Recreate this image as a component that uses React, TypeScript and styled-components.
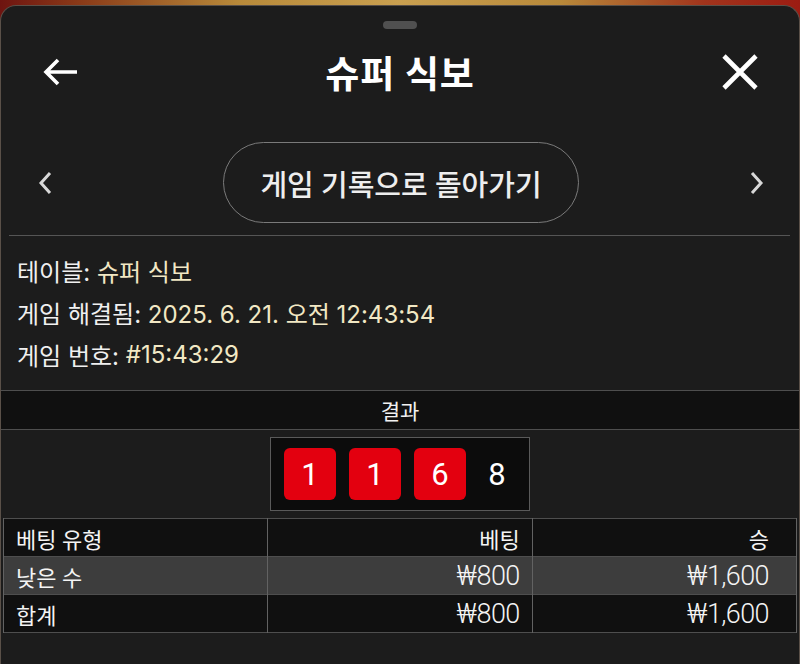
import React from "react";
import styled, { createGlobalStyle } from "styled-components";

const GlobalStyle = createGlobalStyle`
  html, body {
    margin: 0;
    padding: 0;
    height: 100%;
    overflow: hidden;
  }
  body {
    background: linear-gradient(
      90deg,
      #6e1410 0%,
      #8a3a18 10%,
      #b88a3a 30%,
      #c9a050 50%,
      #b8893a 70%,
      #a1341c 88%,
      #9c1c12 100%
    );
    font-family: Roboto, "Noto Sans CJK KR", sans-serif;
    color: #f0f0f0;
  }
`;

const colors = {
  panel: "#1c1c1c",
  dark: "#101010",
  line: "#4e4e4e",
  cellLine: "#626262",
  highlight: "#3d3d3d",
  value: "#f2e8c4",
  red: "#e3000f",
};

const Sheet = styled.div`
  margin-top: 5px;
  height: 659px;
  box-sizing: border-box;
  background: ${colors.panel};
  border: 1px solid #5a5048;
  border-bottom: none;
  border-radius: 16px 16px 0 0;
  display: flex;
  flex-direction: column;
`;

const Handle = styled.div`
  align-self: center;
  width: 34px;
  height: 8px;
  border-radius: 4px;
  background: #505050;
  margin-top: 15px;
`;

const Header = styled.div`
  display: grid;
  grid-template-columns: 120px 1fr 120px;
  align-items: center;
  height: 86px;
`;

const IconButton = styled.button<{ $side: "left" | "right" }>`
  background: none;
  border: none;
  padding: 0;
  display: flex;
  justify-content: center;
  align-items: center;
  color: #ffffff;
  width: 50px;
  height: 50px;
  justify-self: ${(p) => (p.$side === "left" ? "start" : "end")};
  margin: ${(p) => (p.$side === "left" ? "0 0 0 35px" : "0 34px 0 0")};
  cursor: pointer;
`;

const Title = styled.h1`
  margin: 0;
  text-align: center;
  font-size: 37px;
  font-weight: 700;
  color: #ffffff;
  letter-spacing: 0.8px;
`;

const NavRow = styled.div`
  display: flex;
  align-items: center;
  justify-content: space-between;
  margin-top: 27px;
  padding: 0 28px 0 30px;
`;

const Chevron = styled.button`
  background: none;
  border: none;
  padding: 0;
  width: 28px;
  height: 40px;
  display: flex;
  align-items: center;
  justify-content: center;
  color: #d8d8d8;
  cursor: pointer;
`;

const PillButton = styled.button`
  height: 81px;
  width: 356px;
  box-sizing: border-box;
  border: 1px solid #7a7a7a;
  border-radius: 41px;
  background: transparent;
  color: #eeeeee;
  font-family: Roboto, "Noto Sans CJK KR", sans-serif;
  font-size: 29px;
  font-weight: 500;
  cursor: pointer;
`;

const Divider = styled.hr`
  border: none;
  height: 1px;
  background: #555555;
  margin: 12px 9px 0 8px;
`;

const InfoList = styled.div`
  display: flex;
  flex-direction: column;
  padding: 13px 16px 0;
  margin-bottom: 15px;
`;

const InfoLine = styled.div`
  height: 42px;
  display: flex;
  align-items: center;
  font-family: Inter, "Noto Sans CJK KR", sans-serif;
  font-size: 24px;
  color: #f0f0f0;
  white-space: pre;
`;

const Value = styled.span`
  color: ${colors.value};
`;

const SectionHead = styled.div`
  border-top: 1px solid ${colors.line};
  border-bottom: 1px solid ${colors.line};
  background: ${colors.dark};
  height: 38px;
  display: flex;
  align-items: center;
  justify-content: center;
  font-size: 21px;
  color: #f2f2f2;
`;

const DiceArea = styled.div`
  display: flex;
  justify-content: center;
  padding: 7px 0;
`;

const DiceBox = styled.div`
  display: flex;
  align-items: center;
  gap: 13px;
  padding: 10px 17px 10px 13px;
  background: #0c0c0c;
  border: 1px solid #5a5a5a;
`;

const Die = styled.div`
  width: 52px;
  height: 52px;
  border-radius: 6px;
  background: ${colors.red};
  display: flex;
  align-items: center;
  justify-content: center;
  font-size: 31px;
  color: #ffffff;
`;

const Total = styled.div`
  width: 30px;
  margin-left: 3px;
  text-align: center;
  font-size: 31px;
  color: #ffffff;
`;

const Table = styled.table`
  margin: 0 2px;
  width: calc(100% - 4px);
  border-collapse: collapse;
  table-layout: fixed;
  border-top: 1px solid ${colors.line};
  border-bottom: 1px solid ${colors.line};
`;

const Row = styled.tr<{ $highlight?: boolean }>`
  background: ${(p) => (p.$highlight ? colors.highlight : colors.dark)};
  & + & {
    border-top: 1px solid ${colors.line};
  }
`;

const Cell = styled.td<{ $num?: boolean; $last?: boolean }>`
  height: 37px;
  padding: 0 ${(p) => (p.$last ? "27px" : "12px")} 0 12px;
  font-size: ${(p) => (p.$num ? "27px" : "22px")};
  font-weight: ${(p) => (p.$num ? 300 : 400)};
  color: #f4f4f4;
  text-align: ${(p) => (p.$num ? "right" : "left")};
  border-left: 1px solid ${colors.cellLine};
  border-right: 1px solid ${colors.cellLine};
  letter-spacing: ${(p) => (p.$num ? "-0.6px" : "0")};
`;

const HeadCell = styled(Cell)<{ $right?: boolean }>`
  font-size: 22px;
  font-weight: 400;
  text-align: ${(p) => (p.$right ? "right" : "left")};
`;

const dice = [1, 1, 6];

const rows = [
  { type: "낮은 수", bet: "₩800", win: "₩1,600", highlight: true },
  { type: "합계", bet: "₩800", win: "₩1,600", highlight: false },
];

export default function App() {
  return (
    <>
      <GlobalStyle />
      <Sheet>
        <Handle />
        <Header>
          <IconButton $side="left" aria-label="뒤로">
            <svg width="36" height="28" viewBox="0 0 36 28" fill="none">
              <path
                d="M34 14H3M15 2L3 14l12 12"
                stroke="currentColor"
                strokeWidth="3.6"
              />
            </svg>
          </IconButton>
          <Title>슈퍼 식보</Title>
          <IconButton $side="right" aria-label="닫기">
            <svg width="36" height="36" viewBox="0 0 36 36" fill="none">
              <path
                d="M2 2l32 32M34 2L2 34"
                stroke="currentColor"
                strokeWidth="4.6"
              />
            </svg>
          </IconButton>
        </Header>

        <NavRow>
          <Chevron aria-label="이전">
            <svg width="16" height="24" viewBox="0 0 16 24" fill="none">
              <path d="M13 2L4 12l9 10" stroke="currentColor" strokeWidth="3" />
            </svg>
          </Chevron>
          <PillButton>게임 기록으로 돌아가기</PillButton>
          <Chevron aria-label="다음">
            <svg width="16" height="24" viewBox="0 0 16 24" fill="none">
              <path d="M3 2l9 10-9 10" stroke="currentColor" strokeWidth="3" />
            </svg>
          </Chevron>
        </NavRow>

        <Divider />

        <InfoList>
          <InfoLine>
            테이블: <Value>슈퍼 식보</Value>
          </InfoLine>
          <InfoLine>
            게임 해결됨: <Value>2025. 6. 21. 오전 12:43:54</Value>
          </InfoLine>
          <InfoLine>
            게임 번호: <Value>#15:43:29</Value>
          </InfoLine>
        </InfoList>

        <SectionHead>결과</SectionHead>
        <DiceArea>
          <DiceBox>
            {dice.map((d, i) => (
              <Die key={i}>{d}</Die>
            ))}
            <Total>{dice.reduce((a, b) => a + b, 0)}</Total>
          </DiceBox>
        </DiceArea>

        <Table>
          <tbody>
            <Row>
              <HeadCell>베팅 유형</HeadCell>
              <HeadCell $right>베팅</HeadCell>
              <HeadCell $right $last>
                승
              </HeadCell>
            </Row>
            {rows.map((r) => (
              <Row key={r.type} $highlight={r.highlight}>
                <Cell>{r.type}</Cell>
                <Cell $num>{r.bet}</Cell>
                <Cell $num $last>
                  {r.win}
                </Cell>
              </Row>
            ))}
          </tbody>
        </Table>
      </Sheet>
    </>
  );
}
